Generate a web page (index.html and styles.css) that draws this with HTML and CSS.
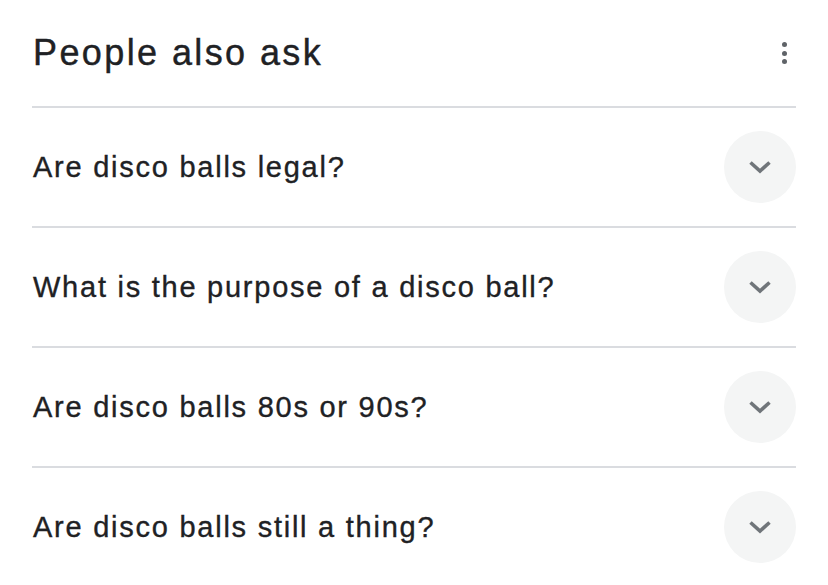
FILE: index.html
```html
<!DOCTYPE html>
<html>
<head>
<meta charset="utf-8">
<link rel="stylesheet" href="styles.css">
</head>
<body>
<div class="paa">
  <div class="header">
    <h2 class="title">People also ask</h2>
    <div class="kebab" aria-label="More options">
      <span class="dot"></span><span class="dot"></span><span class="dot"></span>
    </div>
  </div>
  <div class="row">
    <span class="q">Are disco balls legal?</span>
    <span class="toggle"><svg viewBox="0 0 24 24" width="24" height="24"><path d="M2.5 7.5 L12 16 L21.5 7.5" fill="none" stroke="#70757a" stroke-width="3.6"/></svg></span>
  </div>
  <div class="row">
    <span class="q">What is the purpose of a disco ball?</span>
    <span class="toggle"><svg viewBox="0 0 24 24" width="24" height="24"><path d="M2.5 7.5 L12 16 L21.5 7.5" fill="none" stroke="#70757a" stroke-width="3.6"/></svg></span>
  </div>
  <div class="row">
    <span class="q">Are disco balls 80s or 90s?</span>
    <span class="toggle"><svg viewBox="0 0 24 24" width="24" height="24"><path d="M2.5 7.5 L12 16 L21.5 7.5" fill="none" stroke="#70757a" stroke-width="3.6"/></svg></span>
  </div>
  <div class="row">
    <span class="q">Are disco balls still a thing?</span>
    <span class="toggle"><svg viewBox="0 0 24 24" width="24" height="24"><path d="M2.5 7.5 L12 16 L21.5 7.5" fill="none" stroke="#70757a" stroke-width="3.6"/></svg></span>
  </div>
</div>
</body>
</html>
```

FILE: styles.css
```css
html, body {
  margin: 0;
  padding: 0;
  background: #ffffff;
}
body {
  font-family: "Liberation Sans", Arial, Helvetica, sans-serif;
  color: #202124;
}
.paa {
  padding: 0 32px;
}
.header {
  height: 106px;
  display: flex;
  align-items: center;
  justify-content: space-between;
}
.title {
  margin: 0;
  font-size: 36px;
  font-weight: 400;
  line-height: 44px;
  letter-spacing: 2.4px;
  padding-left: 1px;
  -webkit-text-stroke: 0.4px #202124;
}
.kebab {
  display: flex;
  flex-direction: column;
  align-items: center;
  gap: 3.7px;
  width: 24px;
}
.dot {
  width: 5px;
  height: 5px;
  border-radius: 50%;
  background: #5f6368;
}
.row {
  border-top: 2px solid #dadce0;
  height: 118px;
  display: flex;
  align-items: center;
  justify-content: space-between;
}
.q {
  font-size: 29px;
  line-height: 36px;
  letter-spacing: 1.75px;
  padding-left: 1px;
  -webkit-text-stroke: 0.35px #202124;
}
.toggle {
  width: 72px;
  height: 72px;
  border-radius: 50%;
  background: #f4f5f5;
  display: flex;
  align-items: center;
  justify-content: center;
}
.toggle svg {
  display: block;
}
```
